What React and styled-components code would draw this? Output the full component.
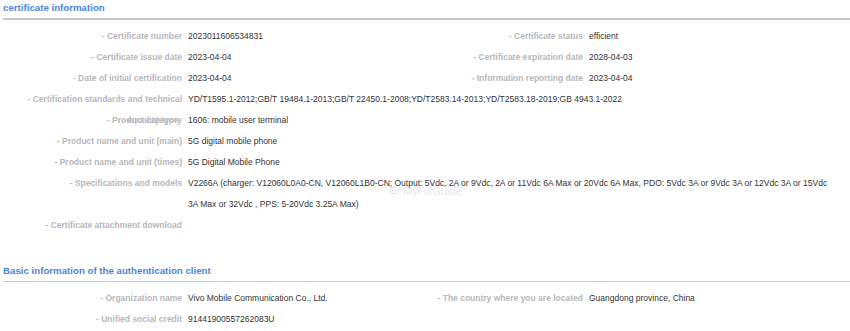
import styled, { createGlobalStyle } from "styled-components";

const GlobalStyle = createGlobalStyle`
  html, body {
    margin: 0;
    padding: 0;
    background: #fff;
  }
  body {
    font-family: "Liberation Sans", Arial, sans-serif;
  }
`;

const certRows = [
  { label: "Certificate number", value: "2023011606534831", label2: "Certificate status", value2: "efficient" },
  { label: "Certificate issue date", value: "2023-04-04", label2: "Certificate expiration date", value2: "2028-04-03" },
  { label: "Date of initial certification", value: "2023-04-04", label2: "Information reporting date", value2: "2023-04-04" },
  {
    label: "Certification standards and technical",
    value: "YD/T1595.1-2012;GB/T 19484.1-2013;GB/T 22450.1-2008;YD/T2583.14-2013;YD/T2583.18-2019;GB 4943.1-2022",
  },
  { label: "Product category", ghost: true, value: "1606: mobile user terminal" },
  { label: "Product name and unit (main)", value: "5G digital mobile phone" },
  { label: "Product name and unit (times)", value: "5G Digital Mobile Phone" },
  {
    label: "Specifications and models",
    value:
      "V2266A (charger: V12060L0A0-CN, V12060L1B0-CN; Output: 5Vdc, 2A or 9Vdc, 2A or 11Vdc 6A Max or 20Vdc 6A Max, PDO: 5Vdc 3A or 9Vdc 3A or 12Vdc 3A or 15Vdc 3A Max or 32Vdc , PPS: 5-20Vdc 3.25A Max)",
  },
  { label: "Certificate attachment download", value: "" },
];

const clientRows = [
  {
    label: "Organization name",
    value: "Vivo Mobile Communication Co., Ltd.",
    label2: "The country where you are located",
    value2: "Guangdong province, China",
  },
  { label: "Unified social credit", value: "91441900557262083U" },
];

const InfoGrid = ({ rows }) => (
  <Grid>
    {rows.map((r) =>
      r.label2 ? (
        <Row key={r.label}>
          <Label>- {r.label}</Label>
          <Value>{r.value}</Value>
          <Label>- {r.label2}</Label>
          <Value>{r.value2}</Value>
        </Row>
      ) : (
        <Row key={r.label}>
          <Label>
            - {r.label}
            {r.ghost && <Ghost>equality type</Ghost>}
          </Label>
          <Value $wide>{r.value}</Value>
        </Row>
      )
    )}
  </Grid>
);

const App = () => {
  return (
    <Page>
      <GlobalStyle />
      <Section>
        <Title $thick>certificate information</Title>
        <InfoGrid rows={certRows} />
        <Watermark>
          <svg width="9" height="8" viewBox="0 0 9 8">
            <rect x="0.5" y="0.5" width="8" height="6" rx="1" fill="none" stroke="#e4e4ec" strokeWidth="1" />
            <path d="M2 3.5h5" stroke="#e4e4ec" strokeWidth="1" />
          </svg>
          MyFixGuide
        </Watermark>
      </Section>
      <Section $second>
        <Title>Basic information of the authentication client</Title>
        <InfoGrid rows={clientRows} />
      </Section>
    </Page>
  );
};

export default App;

const Page = styled.div`
  width: 850px;
  height: 331px;
  overflow: hidden;
  background: #fff;
`;

const Section = styled.section`
  position: relative;
  padding: 0 0 0 3px;
  margin-top: ${(p) => (p.$second ? "28px" : "1px")};
`;

const Title = styled.h2`
  margin: 0;
  padding: 0 0 4px;
  font-size: 9.7px;
  line-height: 13px;
  font-weight: 700;
  color: #4a86d8;
  border-bottom: ${(p) => (p.$thick ? "2px" : "1px")} solid #c8c8cc;
`;

const Grid = styled.div`
  display: flex;
  flex-direction: column;
  padding: 6px 12px 0 0;
`;

const Row = styled.div`
  display: grid;
  grid-template-columns: 179px 200px 189px 1fr;
  column-gap: 6px;
  font-size: 8.5px;
  line-height: 21px;
`;

const Label = styled.div`
  position: relative;
  text-align: right;
  font-weight: 700;
  color: #b8b8bc;
  white-space: nowrap;
`;

const Ghost = styled.span`
  position: absolute;
  right: 3px;
  top: 0;
  color: #b8b8bc;
  opacity: 0.8;
`;

const Value = styled.div`
  color: #333;
  grid-column: ${(p) => (p.$wide ? "2 / 5" : "auto")};
  min-height: 21px;
`;

const Watermark = styled.div`
  position: absolute;
  left: 390px;
  top: 184px;
  display: flex;
  align-items: center;
  gap: 4px;
  font-size: 11px;
  color: #e8e8ee;
  pointer-events: none;
`;
